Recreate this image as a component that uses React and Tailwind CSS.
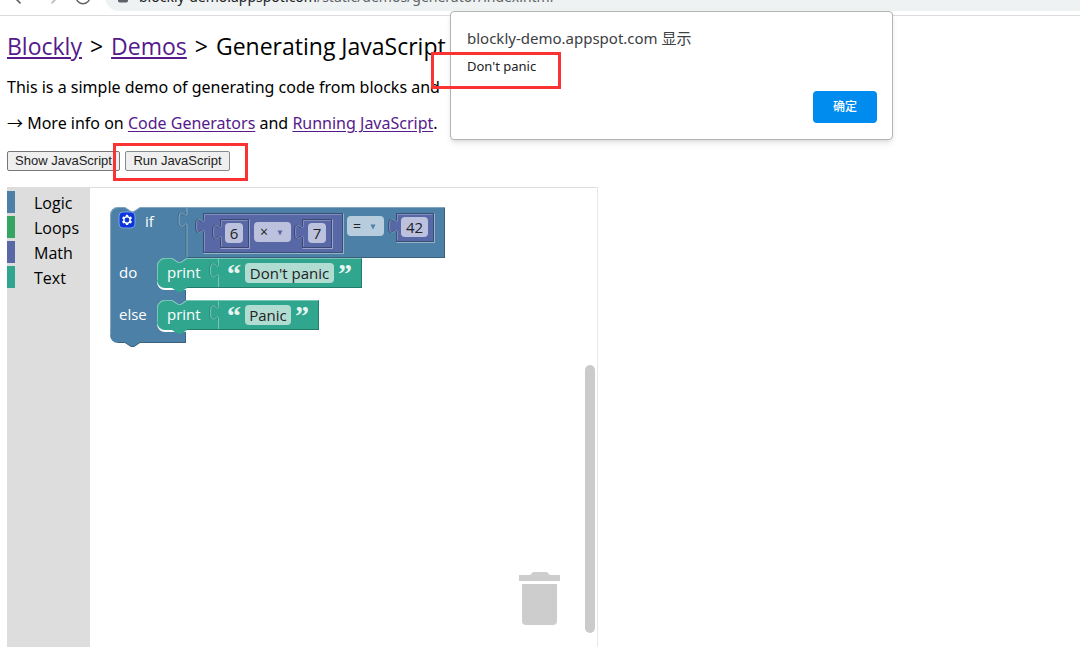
import React, { useState } from 'react';
import { ArrowLeft, ArrowRight, RotateCw, Lock } from 'lucide-react';

const LOGIC = '#4c80a6';
const MATH = '#5867a6';
const TEXT = '#31a68e';

const categories = [
  { name: 'Logic', stripe: 'bg-[#4c80a6]' },
  { name: 'Loops', stripe: 'bg-[#36a563]' },
  { name: 'Math', stripe: 'bg-[#5867a6]' },
  { name: 'Text', stripe: 'bg-[#31a68e]' },
];

const TAB = 'c0,10 -8,-8 -8,7.5 s8,-2.5 8,7.5';
const NOTCH = 'l6,4 h3 l6,-4';
const NOTCH_BACK = 'l-6,4 h-3 l-6,-4';

// Value block with a puzzle tab on its left side
const ValueBlock = ({ x, y, w, h, fill }) => (
  <g>
    <path d={`M${x},${y} v5 ${TAB} V${y + h} h${w} v${-h} z`} fill={fill} stroke="#000" strokeOpacity="0.3" />
    <path
      d={`M${x + w - 1},${y + 1} H${x + 1} v4 ${TAB} V${y + h - 1}`}
      fill="none"
      stroke="#fff"
      strokeOpacity="0.25"
    />
    <path d={`M${x},${y + h + 1} h${w + 1} V${y}`} fill="none" stroke="#fff" strokeOpacity="0.4" />
  </g>
);

const PrintBlock = ({ y, right }) => (
  <g>
    <path
      d={`M157,${y + 8} a8,8 0 0 1 8,-8 H172 ${NOTCH} H${right} v30 H187 ${NOTCH_BACK} H165 a8,8 0 0 1 -8,-8 z`}
      fill={TEXT}
    />
    <path
      d={`M157.5,${y + 22} v-14 a8,8 0 0 1 8,-7.5 H172 ${NOTCH} H${right}`}
      fill="none"
      stroke="#fff"
      strokeOpacity="0.35"
    />
    <path d={`M${right - 0.5},${y} v29.5 H187`} fill="none" stroke="#000" strokeOpacity="0.25" />
    <path d={`M218.5,${y + 1} v4 ${TAB} v9`} fill="none" stroke="#fff" strokeOpacity="0.35" />
    <path d={`M217.5,${y + 5} ${TAB}`} fill="none" stroke="#000" strokeOpacity="0.15" />
    <text x="167" y={y + 20} fill="#fff" fontSize="15">print</text>
    <text x="227" y={y + 25} fill="#e6f5f1" fontSize="28" fontWeight="700" fontFamily="Liberation Serif, serif">“</text>
    <text x={right - 24} y={y + 25} fill="#e6f5f1" fontSize="28" fontWeight="700" fontFamily="Liberation Serif, serif">”</text>
  </g>
);

const BlockShapes = () => (
  <svg
    className="block font-['Open_Sans',sans-serif]"
    width="507"
    height="459"
    viewBox="90 188 507 459"
    aria-hidden="true"
  >
    <path
      d={`M110,215 a8,8 0 0 1 8,-8 H125 ${NOTCH} H445 V258 H187 ${NOTCH_BACK} H165 a8,8 0 0 0 -8,8
        V282 a8,8 0 0 0 8,8 H186 V300 H187 ${NOTCH_BACK} H165 a8,8 0 0 0 -8,8
        V324 a8,8 0 0 0 8,8 H186 V343 H140 ${NOTCH_BACK} H118 a8,8 0 0 1 -8,-8 z`}
      fill={LOGIC}
    />
    <path
      d={`M110.5,335 V215 a8,8 0 0 1 8,-7.5 H125 ${NOTCH} H445`}
      fill="none"
      stroke="#fff"
      strokeOpacity="0.3"
    />
    <path
      d={`M444.5,208 V257.5 H187 M186,342.5 H140 ${NOTCH_BACK} H118`}
      fill="none"
      stroke="#000"
      strokeOpacity="0.25"
    />
    <path d="M185.5,290 v10 M185.5,332 v10" stroke="#000" strokeOpacity="0.2" />
    <path d={`M187,208 v4 ${TAB} V257`} fill="none" stroke="#fff" strokeOpacity="0.35" />
    <path d={`M186,212 ${TAB} V257`} fill="none" stroke="#000" strokeOpacity="0.18" />

    <ValueBlock x={203.5} y={213.5} w={139} h={39} fill={MATH} />
    <ValueBlock x={220.5} y={219.5} w={28} h={28} fill={MATH} />
    <ValueBlock x={302.5} y={219.5} w={29} h={28} fill={MATH} />
    <ValueBlock x={396.5} y={213.5} w={37} h={28} fill={MATH} />

    <PrintBlock y={258} right={362} />
    <PrintBlock y={300} right={319} />

    <g fill="#fff" fontSize="15">
      <text x="145" y="227">if</text>
      <text x="119" y="278">do</text>
      <text x="119" y="320">else</text>
    </g>

    <g fill="#cdcdcd">
      <path d="M519,575 h11 l3,-3 h14 l3,3 h10 v6 h-41 z" />
      <path d="M522,584 h35 v37 a4,4 0 0 1 -4,4 h-27 a4,4 0 0 1 -4,-4 z" />
    </g>
    <rect x="585" y="365" width="10" height="268" rx="5" fill="#cbcbcb" />
  </svg>
);

const Field = ({ label, value, className }) => {
  const [text, setText] = useState(value);
  return (
    <input
      type="text"
      aria-label={label}
      value={text}
      onChange={(e) => setText(e.target.value)}
      className={`absolute h-5 rounded text-center text-[15px] leading-5 text-[#222] outline-none ${className}`}
    />
  );
};

const FieldDropdown = ({ label, options, className, arrow }) => (
  <div className={`absolute h-5 w-[37px] rounded ${className}`}>
    <select
      aria-label={label}
      className="block h-5 w-full appearance-none bg-transparent pl-[6px] text-sm leading-5 text-[#222] outline-none"
    >
      {options.map((option) => (
        <option key={option}>{option}</option>
      ))}
    </select>
    <svg className="pointer-events-none absolute right-2 top-2" width="6" height="6" viewBox="0 0 6 6">
      <path d="M0.5,0.5 h5 l-2.5,5 z" fill={arrow} />
    </svg>
  </div>
);

const MutatorButton = () => (
  <button type="button" aria-label="Edit if block" className="absolute left-[28px] top-[23px]">
    <svg className="block" width="18" height="18" viewBox="-1 -1 18 18">
      <rect x="0" y="0" width="16" height="16" rx="4" fill="#0a35dc" stroke="#7f9fe0" />
      <path
        d="m4.203,7.296 0,1.368 -0.92,0.677 -0.11,0.41 0.9,1.59 0.41,0.11 1.043,-0.457 1.187,0.683 0.127,1.134 0.3,0.3 1.8,0 0.3,-0.299 0.127,-1.138 1.185,-0.682 1.046,0.458 0.409,-0.11 0.9,-1.59 -0.11,-0.41 -0.92,-0.677 0,-1.366 0.92,-0.677 0.11,-0.41 -0.9,-1.59 -0.409,-0.109 -1.046,0.458 -1.185,-0.682 -0.127,-1.138 -0.3,-0.299 -1.8,0 -0.3,0.3 -0.126,1.135 -1.187,0.682 -1.043,-0.457 -0.41,0.11 -0.899,1.59 0.108,0.409z"
        fill="#fff"
      />
      <circle cx="8" cy="8" r="2.4" fill="#0a35dc" />
    </svg>
  </button>
);

const Workspace = () => (
  <div className="flex w-full max-w-[591px] flex-1 border-r border-[#e8e8e8] font-['Open_Sans',sans-serif]">
    <ul className="w-[83px] shrink-0 bg-[#dddddd] pt-1">
      {categories.map((category) => (
        <li key={category.name} className="mb-[3px] flex h-[22px] items-center">
          <span className={`h-full w-2 ${category.stripe}`}></span>
          <span className="ml-[19px] pt-[2px] text-base leading-5">{category.name}</span>
        </li>
      ))}
    </ul>
    <div className="relative min-w-0 flex-1 overflow-hidden border-t border-[#dddddd]">
      <BlockShapes />
      <MutatorButton />
      <Field label="First number" value="6" className="left-[135px] top-[35px] w-[18px] bg-[#bcc2de]" />
      <FieldDropdown
        label="Operator"
        options={['×', '+', '-', '÷', '^']}
        className="left-[164px] top-[34px] bg-[#bcc2de]"
        arrow="#5867a6"
      />
      <Field label="Second number" value="7" className="left-[218px] top-[35px] w-[18px] bg-[#bcc2de]" />
      <FieldDropdown
        label="Comparison"
        options={['=', '≠', '<', '≤', '>', '≥']}
        className="left-[257px] top-[28px] bg-[#b7cddd]"
        arrow="#4c80a6"
      />
      <Field label="Compared number" value="42" className="left-[311px] top-[29px] w-[27px] bg-[#bcc2de]" />
      <Field label="Text when true" value="Don't panic" className="left-[155px] top-[75px] w-[89px] bg-[#b1dcd2]" />
      <Field label="Text when false" value="Panic" className="left-[155px] top-[117px] w-[46px] bg-[#b1dcd2]" />
    </div>
  </div>
);

const BrowserBar = () => (
  <header className="flex h-4 shrink-0 items-end overflow-hidden border-b border-[#dadcdf] bg-white pb-1 pl-[10px] text-[#5f6368]">
    <div className="flex h-7 w-[95px] items-center gap-3">
      <ArrowLeft size={20} />
      <ArrowRight size={20} className="text-[#babcbe]" />
      <RotateCw size={18} />
    </div>
    <div className="flex h-7 flex-1 items-center rounded-l-full bg-[#eff2f3] pl-3 text-sm">
      <Lock size={12} fill="currentColor" />
      <span className="ml-[10px] whitespace-nowrap">
        <span className="text-[#202124]">blockly-demo.appspot.com</span>/static/demos/generator/index.html
      </span>
    </div>
  </header>
);

const AlertDialog = () => (
  <div
    role="alertdialog"
    aria-labelledby="alert-title"
    aria-describedby="alert-message"
    className="absolute left-[450px] top-[11px] flex w-[443px] flex-col rounded border border-[#b4b4b4] bg-white pb-4 pl-4 pr-[15px] pt-[14px] shadow-md"
  >
    <h2 id="alert-title" className="text-[15px] leading-6 text-[#3c4043]">blockly-demo.appspot.com 显示</h2>
    <p id="alert-message" className="mt-1 text-[13px] leading-6 text-[#202124]">Don't panic</p>
    <button
      type="button"
      className="mt-[13px] h-8 w-16 self-end rounded bg-[#008bef] text-xs font-medium text-white"
    >
      确定
    </button>
    <div className="pointer-events-none absolute -left-5 top-10 h-[37px] w-[130px] border-3 border-[#fa3232]"></div>
  </div>
);

const App = () => {
  const link = 'text-[#551a8b] underline underline-offset-2';

  return (
    <div className="relative flex min-h-screen flex-col bg-white font-['Noto_Sans','Noto_Sans_CJK_SC',sans-serif] text-black">
      <BrowserBar />
      <main className="flex flex-1 flex-col px-[7px] pt-[14px]">
        <h1 className="flex gap-2 font-['Open_Sans',sans-serif] text-[23px] leading-8">
          <a href="#blockly" className={link}>Blockly</a>
          <span>&gt;</span>
          <a href="#demos" className={link}>Demos</a>
          <span>&gt;</span>
          <span>Generating JavaScript</span>
        </h1>
        <p className="mt-[13px] text-base leading-6">This is a simple demo of generating code from blocks and</p>
        <p className="mt-3 text-base leading-6">
          → More info on <a href="#generators" className={link}>Code Generators</a> and{' '}
          <a href="#running" className={link}>Running JavaScript</a>.
        </p>
        <div className="relative my-4 flex gap-[5px] font-['Liberation_Sans',sans-serif] text-[13px] leading-4 text-[#222]">
          <button type="button" className="h-5 w-[113px] whitespace-nowrap rounded-xs border border-[#767676] bg-[#efefef]">
            Show JavaScript
          </button>
          <button type="button" className="h-5 w-[105px] whitespace-nowrap rounded-xs border border-[#8a8a8a] bg-[#efefef]">
            Run JavaScript
          </button>
          <div className="pointer-events-none absolute -top-2 left-[106px] h-[38px] w-[135px] border-3 border-[#fa3232]"></div>
        </div>
        <Workspace />
      </main>
      <AlertDialog />
    </div>
  );
};

export default App;
